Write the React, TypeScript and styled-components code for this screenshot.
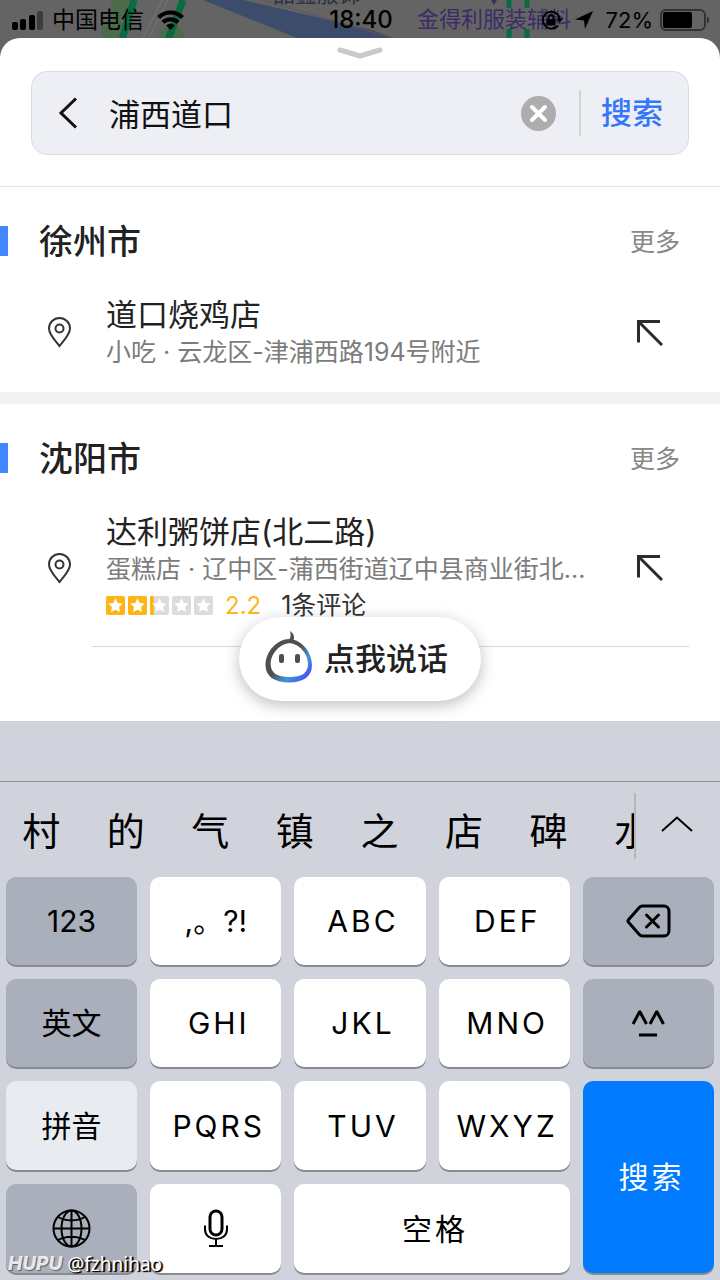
import React, { useState } from 'react';
import styled, { createGlobalStyle, css } from 'styled-components';

const GlobalStyle = createGlobalStyle`
  * { box-sizing: border-box; }
  body {
    margin: 0;
    background: #d0d3db;
    color: #222;
    font-family: Inter, "Noto Sans CJK SC", sans-serif;
  }
  button, input { font: inherit; color: inherit; }
  button { border: 0; padding: 0; background: none; cursor: pointer; }
  h2, h3, p, ul { margin: 0; padding: 0; font-weight: 400; }
  ul { list-style: none; }
  a { color: inherit; text-decoration: none; }
  svg { display: block; flex: none; }
`;

const Screen = styled.div`
  position: relative;
  display: flex;
  flex-direction: column;
  min-height: 100vh;
  overflow: hidden;
`;

/* ---------- map and status bar ---------- */

const MapStrip = styled.div`
  position: absolute;
  top: 0;
  left: 0;
  right: 0;
  height: 60px;
  overflow: hidden;
  background: #646464;
`;

const MapLabel = styled.span<{ $x: number; $y: number; $color: string }>`
  position: absolute;
  left: ${(p) => p.$x}px;
  top: ${(p) => p.$y}px;
  font-size: 22px;
  line-height: 26px;
  white-space: nowrap;
  color: ${(p) => p.$color};
`;

const StatusBar = styled.header`
  position: relative;
  display: grid;
  grid-template-columns: 1fr auto 1fr;
  align-items: center;
  height: 38px;
  padding: 2px 10px 0 12px;
  font-size: 23px;
  line-height: 36px;
  color: #000;
`;

const StatusGroup = styled.div<{ $end?: boolean }>`
  display: flex;
  align-items: center;
  gap: ${(p) => (p.$end ? 12 : 9)}px;
  justify-content: ${(p) => (p.$end ? 'flex-end' : 'flex-start')};
`;

const Carrier = styled.span`
  margin-right: 4px;
`;

const Time = styled.time`
  font-size: 24px;
  font-weight: 500;
`;

const Battery = styled.span`
  display: flex;
  align-items: center;
  gap: 7px;
  font-size: 22px;
`;

/* ---------- sheet ---------- */

const Sheet = styled.main`
  position: relative;
  flex: 1;
  display: flex;
  flex-direction: column;
  padding-bottom: 74px;
  background: #fff;
  border-radius: 20px 20px 0 0;
`;

const Handle = styled.div`
  display: flex;
  justify-content: center;
  height: 33px;
  padding-top: 8px;
`;

const SearchBox = styled.form`
  display: flex;
  align-items: center;
  height: 84px;
  margin: 0 31px 31px;
  border: 1px solid #dbdce0;
  border-radius: 16px;
  background: #eeeff4;
`;

const BackButton = styled.button`
  display: flex;
  align-items: center;
  justify-content: center;
  width: 72px;
  height: 100%;
`;

const SearchInput = styled.input`
  flex: 1;
  min-width: 0;
  height: 46px;
  padding: 0 0 0 5px;
  border: 0;
  outline: 0;
  background: none;
  font-family: "Noto Sans CJK SC", sans-serif;
  font-size: 31px;
  line-height: 46px;
  color: #111;
`;

const ClearButton = styled.button`
  display: flex;
  margin-right: 23px;
`;

const SearchSubmit = styled.button`
  height: 46px;
  padding: 0 25px 0 20px;
  border-left: 2px solid #d3d4d8;
  font-size: 31px;
  font-weight: 500;
  line-height: 46px;
  color: #3377fb;
`;

const Section = styled.section`
  border-top: 1px solid #e4e4e4;

  & + & {
    border-top: 12px solid #f2f2f2;
  }
`;

const SectionHead = styled.div`
  display: flex;
  align-items: center;
  height: 108px;
  padding-right: 40px;

  &::before {
    content: "";
    width: 8px;
    height: 30px;
    margin-right: 31px;
    background: #4187fd;
  }
`;

const City = styled.h2`
  flex: 1;
  padding-top: 2px;
  font-size: 34px;
  font-weight: 500;
  line-height: 40px;
`;

const More = styled.a`
  padding-top: 2px;
  font-size: 25px;
  line-height: 36px;
  color: #888;
`;

const Item = styled.article`
  display: flex;
  align-items: center;
  padding: 0 57px 22px 48px;
`;

const ItemText = styled.div`
  flex: 1;
  min-width: 0;
  padding-left: 35px;
`;

const ItemTitle = styled.h3`
  font-size: 31px;
  line-height: 40px;
  white-space: nowrap;
`;

const ItemDetail = styled.p`
  font-size: 25px;
  line-height: 35px;
  white-space: nowrap;
  color: #7c7c7c;
`;

const Rating = styled.p`
  display: flex;
  align-items: center;
  gap: 12px;
  font-size: 25px;
  line-height: 37px;
  color: #333;
`;

const Score = styled.span`
  margin-right: 8px;
  font-size: 24px;
  color: #fdb51b;
`;

const Rule = styled.hr`
  height: 1px;
  margin: 0 31px 0 92px;
  border: 0;
  background: #d8d8d8;
`;

const VoiceDock = styled.div`
  position: absolute;
  left: 0;
  right: 0;
  bottom: 20px;
  display: flex;
  justify-content: center;
  pointer-events: none;
`;

const VoiceButton = styled.button`
  display: flex;
  align-items: center;
  gap: 11px;
  height: 84px;
  padding: 0 33px 0 26px;
  border-radius: 42px;
  background: #fff;
  box-shadow: 0 4px 16px rgba(0, 0, 0, 0.26);
  font-size: 31px;
  font-weight: 500;
  line-height: 40px;
  pointer-events: auto;
`;

/* ---------- keyboard ---------- */

const Keyboard = styled.section`
  padding-top: 60px;
  background: #d0d3db;
  color: #000;
`;

const Candidates = styled.div`
  display: flex;
  align-items: flex-start;
  height: 96px;
  padding-top: 11px;
  border-top: 1px solid #8c8f94;
`;

const CandidateList = styled.ul`
  flex: 1;
  display: flex;
  min-width: 0;
  overflow: hidden;
`;

const Candidate = styled.li`
  flex: 0 0 calc(100% * 2 / 15);
  display: flex;
  justify-content: center;

  button {
    padding-right: 2px;
    font-size: 38px;
    line-height: 76px;
  }
`;

const ExpandButton = styled.button`
  display: flex;
  justify-content: center;
  width: 86px;
  height: 66px;
  padding: 23px 3px 0 0;
  border-left: 2px solid #b4b7be;
`;

const Keys = styled.div`
  display: grid;
  grid-template-columns: repeat(5, 1fr);
  grid-template-rows: 88px 88px 89px 89px;
  gap: 14px 13px;
  padding: 0 6px 7px;
`;

type Tone = 'light' | 'dark' | 'pale' | 'blue';

const tones: Record<Tone, string> = {
  light: '#fff',
  dark: '#a9afbb',
  pale: '#e8ebf0',
  blue: '#007aff',
};

const Key = styled.button<{ $tone: Tone; $wide?: boolean; $tall?: boolean; $spaced?: boolean }>`
  display: flex;
  align-items: center;
  justify-content: center;
  border-radius: 10px;
  background: ${(p) => tones[p.$tone]};
  box-shadow: 0 2px 0 #898b90;
  font-size: 30px;
  line-height: 40px;
  ${(p) => p.$tone === 'blue' && css`color: #fff;`}
  ${(p) => p.$wide && css`grid-column: span 2;`}
  ${(p) => p.$tall && css`grid-row: span 2;`}
  ${(p) => p.$spaced && css`
    padding-left: 6px;
    letter-spacing: 3px;
  `}
`;

const Watermark = styled.div`
  position: absolute;
  left: 8px;
  bottom: 4px;
  display: flex;
  align-items: center;
  gap: 5px;
  line-height: 24px;
  color: #fff;
  pointer-events: none;
`;

const Brand = styled.span`
  font: italic 800 19px/24px Inter, sans-serif;
  color: #e6e8ec;
  text-shadow: 1px 1px 1px rgba(0, 0, 0, 0.45);
`;

const Author = styled.span`
  font: 19px/24px "Noto Sans", sans-serif;
  text-shadow: 1px 1px 1px #000, 2px 1px 1px #000;
`;

/* ---------- drawings ---------- */

const MapArt = () => (
  <svg width="720" height="60">
    <ellipse cx="121" cy="6" rx="10" ry="14" fill="#4d6a4a" />
    <ellipse cx="114" cy="34" rx="13" ry="15" fill="#4d6a4a" />
    <ellipse cx="172" cy="37" rx="13" ry="11" fill="#4d6a4a" />
    <path d="M162 0 142 40M168 0 148 40" stroke="#747474" strokeWidth="1" />
    <path d="M134 0 122 40M183 0 168 40" stroke="#086b41" strokeWidth="7" />
    <path d="M203 0H243L372 30 398 40H302Z" fill="#3e4c6c" />
    <path d="M262 0 400 40" stroke="#585858" strokeWidth="1" />
    <path d="M509 0V8M527 0V8M509 29V40M527 29V40" stroke="#086b41" strokeWidth="5" />
    <path d="M491 0h6l-3 5Z" fill="#3c2c66" />
  </svg>
);

const Signal = () => (
  <svg width="31" height="19">
    <rect x="0" y="11" width="6" height="8" rx="2" />
    <rect x="8" y="8" width="6" height="11" rx="2" />
    <rect x="17" y="4" width="6" height="15" rx="2" />
    <rect x="25" y="0" width="6" height="19" rx="2" fill="#3d3d3d" />
  </svg>
);

const Wifi = () => (
  <svg width="27" height="20" fill="none" stroke="#000" strokeWidth="4">
    <path d="M1.500 7.500C8 .7 19 .7 25.500 7.500" />
    <path d="M6 12.300c4-4.200 11-4.200 15 0" />
    <path d="m13.500 20-4.300-4.500c2.300-2.300 6.300-2.300 8.600 0Z" fill="#000" stroke="none" />
  </svg>
);

const RotationLock = () => (
  <svg width="22" height="20" fill="none" stroke="#000" strokeWidth="2">
    <path d="M16.500 4.200A8.500 8.500 0 1 0 17 15.500M16.500 4.200A8.500 8.500 0 0 1 18.500 9" />
    <path d="m15 8.500h7L18.500 13Z" fill="#000" stroke="none" />
    <rect x="5.500" y="9" width="9" height="6.500" rx="1" fill="#000" stroke="none" />
    <path d="M7.500 10V7.500a2.500 2.500 0 0 1 5 0V10" />
  </svg>
);

const Location = () => (
  <svg width="19" height="18">
    <path d="M18 0 10 18 9 9.500 0 8.500Z" />
  </svg>
);

const BatteryArt = () => (
  <svg width="50" height="22">
    <rect x="1" y="1" width="44" height="20" rx="5" fill="none" stroke="#333" strokeWidth="2" />
    <rect x="3" y="3" width="29" height="16" rx="2" />
    <path d="M47 7.500c3 1.500 3 5.500 0 7Z" fill="#333" />
  </svg>
);

const Pin = () => (
  <svg width="23" height="31" fill="none" stroke="#333" strokeWidth="2">
    <path d="M11.500 29C7 23.500 1 17.500 1 11.500a10.500 10.500 0 0 1 21 0c0 6-6 12-10.500 17.500Z" />
    <circle cx="11.500" cy="11.500" r="4" />
  </svg>
);

const FillArrow = () => (
  <svg width="26" height="26" fill="none" stroke="#2b2b2b" strokeWidth="3">
    <path d="M23 1.500H1.500V22.500M2 2l23 23" />
  </svg>
);

const Star = ({ fill }: { fill: number }) => (
  <svg width="19" height="19">
    <rect width="19" height="19" rx="2" fill="#dcdcdc" />
    <rect width={19 * fill} height="19" rx={fill === 1 ? 2 : 1} fill="#fdb414" />
    <path
      d="m9.500 2.300 2.200 4.600 5 .7-3.600 3.500.8 5-4.400-2.400-4.400 2.400.8-5-3.600-3.500 5-.7Z"
      fill="#fff"
    />
  </svg>
);

const Stars = styled.span`
  display: flex;
  gap: 3px;
`;

const Mascot = () => (
  <svg width="48" height="56">
    <defs>
      <linearGradient id="ring" x1="8" y1="12" x2="42" y2="46" gradientUnits="userSpaceOnUse">
        <stop offset="0.450" stopColor="#514e52" />
        <stop offset="0.720" stopColor="#3f96d8" />
        <stop offset="1" stopColor="#4b54f2" />
      </linearGradient>
    </defs>
    <path
      fillRule="evenodd"
      d="M24 8C35 8 47 20 47 34C47 45 39 51.500 24 51.500S.5 45 .5 34C.5 20 13 8 24 8Z
         M24.500 12.300C16 12.300 5.700 22 5.700 33C5.700 42 12 46 24.500 46S43 42 43 33C43 22 33 12.300 24.500 12.300Z"
      fill="url(#ring)"
    />
    <path d="M25 0c4 3 5 5.500 3 10h-4.500c2.500-3.500 2.500-6 1.500-10Z" fill="#514e52" />
    <rect x="14" y="23" width="5" height="9" rx="2" fill="#514e52" />
    <rect x="30" y="23" width="5" height="9" rx="2" fill="#514e52" />
  </svg>
);

const Backspace = () => (
  <svg width="46" height="34" fill="none" stroke="#000" strokeWidth="3" strokeLinejoin="round" strokeLinecap="round">
    <path d="M17.500 2H39a5 5 0 0 1 5 5v20a5 5 0 0 1-5 5H17.500a4 4 0 0 1-3-1.300L3.500 18.300a2 2 0 0 1 0-2.600L14.500 3.300a4 4 0 0 1 3-1.300Z" />
    <path d="m21.500 11 12 12m0-12-12 12" />
  </svg>
);

const Face = () => (
  <svg width="34" height="27" fill="none" stroke="#000" strokeWidth="3">
    <path d="M2 14 8.500 2H9L15.500 14M19 14 25.500 2H26L32.500 14M8 25H26" />
  </svg>
);

const Globe = () => (
  <svg width="39" height="39" fill="none" stroke="#000" strokeWidth="2">
    <circle cx="19.500" cy="19.500" r="18" />
    <ellipse cx="19.500" cy="19.500" rx="10" ry="18" />
    <path d="M19.500 1.500v36M1.500 19.500h36M6 8c8 4.500 19 4.500 27 0M6 31c8-4.500 19-4.500 27 0" />
  </svg>
);

const Mic = () => (
  <svg width="26" height="39" fill="none" stroke="#000" strokeWidth="3">
    <rect x="7" y="2" width="12" height="24" rx="6" />
    <path d="M2 16.500v4c0 6 5 9.500 11 9.500s11-3.500 11-9.500v-4M13 30v6M6 37h14" strokeWidth="2" />
  </svg>
);

/* ---------- content ---------- */

interface Place {
  city: string;
  name: string;
  detail: string;
  score?: number;
  reviews?: string;
}

const places: Place[] = [
  { city: '徐州市', name: '道口烧鸡店', detail: '小吃 · 云龙区-津浦西路194号附近' },
  {
    city: '沈阳市',
    name: '达利粥饼店(北二路)',
    detail: '蛋糕店 · 辽中区-蒲西街道辽中县商业街北...',
    score: 2.2,
    reviews: '1条评论',
  },
];

const candidates = ['村', '的', '气', '镇', '之', '店', '碑', '水'];

interface KeyDef {
  id: string;
  face: React.ReactNode;
  tone?: Tone;
  wide?: boolean;
  tall?: boolean;
  spaced?: boolean;
}

const keys: KeyDef[] = [
  { id: '123', face: '123', tone: 'dark' },
  { id: '标点', face: ',。?!' },
  { id: 'ABC', face: 'ABC', spaced: true },
  { id: 'DEF', face: 'DEF', spaced: true },
  { id: '删除', face: <Backspace />, tone: 'dark' },
  { id: '英文', face: '英文', tone: 'dark' },
  { id: 'GHI', face: 'GHI', spaced: true },
  { id: 'JKL', face: 'JKL', spaced: true },
  { id: 'MNO', face: 'MNO', spaced: true },
  { id: '表情', face: <Face />, tone: 'dark' },
  { id: '拼音', face: '拼音', tone: 'pale' },
  { id: 'PQRS', face: 'PQRS', spaced: true },
  { id: 'TUV', face: 'TUV', spaced: true },
  { id: 'WXYZ', face: 'WXYZ', spaced: true },
  { id: '搜索', face: '搜索', tone: 'blue', tall: true, spaced: true },
  { id: '切换键盘', face: <Globe />, tone: 'dark' },
  { id: '语音', face: <Mic /> },
  { id: '空格', face: '空格', wide: true, spaced: true },
];

export default function App() {
  const [query, setQuery] = useState('浦西道口');

  return (
    <>
      <GlobalStyle />
      <Screen>
        <MapStrip>
          <MapArt />
          <MapLabel $x={273} $y={-19} $color="#2c3242">品鑫服饰</MapLabel>
          <MapLabel $x={417} $y={6} $color="#3c2c66">金得利服装辅料</MapLabel>
        </MapStrip>
        <StatusBar>
          <StatusGroup>
            <Signal />
            <Carrier>中国电信</Carrier>
            <Wifi />
          </StatusGroup>
          <Time>18:40</Time>
          <StatusGroup $end>
            <RotationLock />
            <Location />
            <Battery>
              72%
              <BatteryArt />
            </Battery>
          </StatusGroup>
        </StatusBar>

        <Sheet>
          <Handle>
            <svg width="48" height="14" fill="none" stroke="#c9c9c9" strokeWidth="5" strokeLinecap="round" strokeLinejoin="round">
              <path d="m4 4 20 6 20-6" />
            </svg>
          </Handle>
          <SearchBox onSubmit={(e) => e.preventDefault()}>
            <BackButton type="button" aria-label="返回">
              <svg width="20" height="32" fill="none" stroke="#111" strokeWidth="3">
                <path d="M18 1.500 3 16 18 30.500" />
              </svg>
            </BackButton>
            <SearchInput aria-label="搜索地点" value={query} onChange={(e) => setQuery(e.target.value)} />
            <ClearButton type="button" aria-label="清除" onClick={() => setQuery('')}>
              <svg width="35" height="35">
                <circle cx="17.500" cy="17.500" r="17.500" fill="#adadad" />
                <path d="m11 11 13 13m0-13L11 24" stroke="#fff" strokeWidth="4" strokeLinecap="round" />
              </svg>
            </ClearButton>
            <SearchSubmit type="submit">搜索</SearchSubmit>
          </SearchBox>

          {places.map((place) => (
            <Section key={place.city}>
              <SectionHead>
                <City>{place.city}</City>
                <More href="#more">更多</More>
              </SectionHead>
              <Item>
                <Pin />
                <ItemText>
                  <ItemTitle>{place.name}</ItemTitle>
                  <ItemDetail>{place.detail}</ItemDetail>
                  {place.score !== undefined && (
                    <Rating>
                      <Stars>
                        {[0, 1, 2, 3, 4].map((i) => (
                          <Star key={i} fill={Math.max(0, Math.min(1, place.score! - i))} />
                        ))}
                      </Stars>
                      <Score>{place.score}</Score>
                      {place.reviews}
                    </Rating>
                  )}
                </ItemText>
                <FillArrow />
              </Item>
            </Section>
          ))}
          <Rule />

          <VoiceDock>
            <VoiceButton type="button">
              <Mascot />
              点我说话
            </VoiceButton>
          </VoiceDock>
        </Sheet>

        <Keyboard aria-label="键盘">
          <Candidates>
            <CandidateList>
              {candidates.map((c) => (
                <Candidate key={c}>
                  <button type="button">{c}</button>
                </Candidate>
              ))}
            </CandidateList>
            <ExpandButton type="button" aria-label="展开">
              <svg width="32" height="16" fill="none" stroke="#000" strokeWidth="2">
                <path d="M1 15 16 1.500 31 15" />
              </svg>
            </ExpandButton>
          </Candidates>
          <Keys>
            {keys.map((k) => (
              <Key
                key={k.id}
                type="button"
                aria-label={k.id}
                $tone={k.tone ?? 'light'}
                $wide={k.wide}
                $tall={k.tall}
                $spaced={k.spaced}
              >
                {k.face}
              </Key>
            ))}
          </Keys>
        </Keyboard>

        <Watermark>
          <Brand>HUPU</Brand>
          <Author>@fzhnihao</Author>
        </Watermark>
      </Screen>
    </>
  );
}
